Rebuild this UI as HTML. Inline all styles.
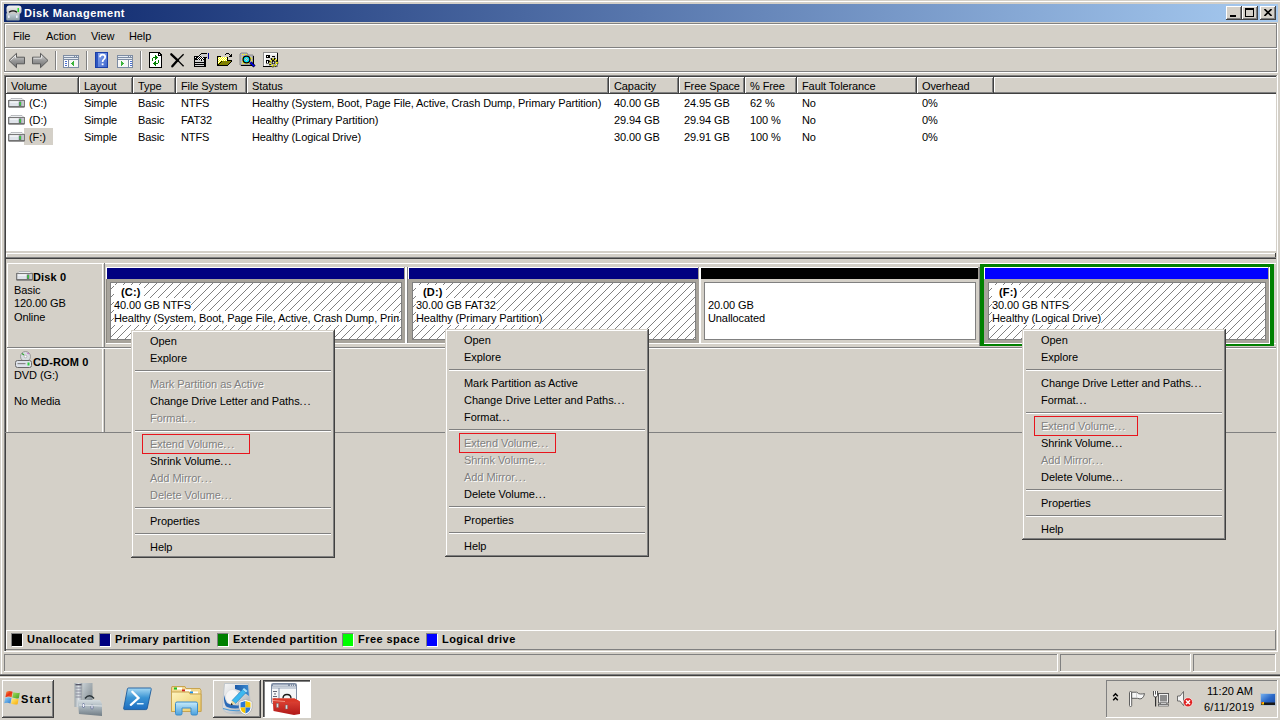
<!DOCTYPE html><html><head><meta charset="utf-8"><style>
html,body{margin:0;padding:0;}
body{width:1280px;height:720px;overflow:hidden;position:relative;background:#D4D0C8;font-family:"Liberation Sans",sans-serif;font-size:11px;}
div{position:absolute;box-sizing:border-box;}
.t{white-space:pre;line-height:13px;height:13px;}
.dis{color:#808080;text-shadow:1px 1px 0 #fff;}
</style></head><body>

<div style="left:1px;top:1px;width:1279px;height:1px;background:#FFFFFF"></div>
<div style="left:1px;top:1px;width:1px;height:675px;background:#FFFFFF"></div>
<div style="left:0px;top:674px;width:1280px;height:1px;background:#808080"></div>
<div style="left:0px;top:675px;width:1280px;height:1px;background:#404040"></div>
<div style="left:4px;top:4px;width:1274px;height:18px;background:linear-gradient(to right,#0A246A,#A6CAF0)"></div>
<div class="t" style="left:24px;top:7px;font-weight:bold;color:#fff;letter-spacing:0.5px;">Disk Management</div>
<div style="left:1226px;top:6px;width:16px;height:14px;background:#D4D0C8"></div>
<div style="left:1226px;top:6px;width:16px;height:1px;background:#FFFFFF"></div>
<div style="left:1226px;top:6px;width:1px;height:14px;background:#FFFFFF"></div>
<div style="left:1226px;top:19px;width:16px;height:1px;background:#404040"></div>
<div style="left:1241px;top:6px;width:1px;height:14px;background:#404040"></div>
<div style="left:1227px;top:18px;width:14px;height:1px;background:#808080"></div>
<div style="left:1240px;top:7px;width:1px;height:12px;background:#808080"></div>
<div style="left:1230px;top:15px;width:6px;height:2px;background:#000"></div>
<div style="left:1242px;top:6px;width:16px;height:14px;background:#D4D0C8"></div>
<div style="left:1242px;top:6px;width:16px;height:1px;background:#FFFFFF"></div>
<div style="left:1242px;top:6px;width:1px;height:14px;background:#FFFFFF"></div>
<div style="left:1242px;top:19px;width:16px;height:1px;background:#404040"></div>
<div style="left:1257px;top:6px;width:1px;height:14px;background:#404040"></div>
<div style="left:1243px;top:18px;width:14px;height:1px;background:#808080"></div>
<div style="left:1256px;top:7px;width:1px;height:12px;background:#808080"></div>
<div style="left:1245px;top:8px;width:9px;height:9px;border:1px solid #000;border-top-width:2px"></div>
<div style="left:1260px;top:6px;width:16px;height:14px;background:#D4D0C8"></div>
<div style="left:1260px;top:6px;width:16px;height:1px;background:#FFFFFF"></div>
<div style="left:1260px;top:6px;width:1px;height:14px;background:#FFFFFF"></div>
<div style="left:1260px;top:19px;width:16px;height:1px;background:#404040"></div>
<div style="left:1275px;top:6px;width:1px;height:14px;background:#404040"></div>
<div style="left:1261px;top:18px;width:14px;height:1px;background:#808080"></div>
<div style="left:1274px;top:7px;width:1px;height:12px;background:#808080"></div>
<svg style="position:absolute;left:1264px;top:9px" width="8" height="7" viewBox="0 0 8 7"><path d="M0.5 0 L7.5 7 M7.5 0 L0.5 7" stroke="#000" stroke-width="1.6"/></svg>
<div style="left:4px;top:23px;width:1274px;height:1px;background:#808080"></div>
<div style="left:5px;top:24px;width:1272px;height:1px;background:#FFFFFF"></div>
<div style="left:4px;top:23px;width:1px;height:25px;background:#808080"></div>
<div style="left:5px;top:24px;width:1px;height:24px;background:#FFFFFF"></div>
<div style="left:1276px;top:23px;width:1px;height:49px;background:#808080"></div>
<div style="left:1277px;top:23px;width:1px;height:50px;background:#FFFFFF"></div>
<div class="t" style="left:13px;top:30px;color:#000;letter-spacing:-0.1px;">File</div>
<div class="t" style="left:46px;top:30px;color:#000;letter-spacing:-0.1px;">Action</div>
<div class="t" style="left:91px;top:30px;color:#000;letter-spacing:-0.1px;">View</div>
<div class="t" style="left:129px;top:30px;color:#000;letter-spacing:-0.1px;">Help</div>
<div style="left:4px;top:47px;width:1273px;height:1px;background:#808080"></div>
<div style="left:5px;top:48px;width:1272px;height:1px;background:#FFFFFF"></div>
<div style="left:4px;top:47px;width:1px;height:25px;background:#808080"></div>
<div style="left:5px;top:48px;width:1px;height:24px;background:#FFFFFF"></div>
<div style="left:4px;top:71px;width:1273px;height:1px;background:#808080"></div>
<div style="left:4px;top:72px;width:1274px;height:1px;background:#FFFFFF"></div>
<div style="left:55px;top:51px;width:1px;height:19px;background:#808080"></div>
<div style="left:56px;top:51px;width:1px;height:19px;background:#FFFFFF"></div>
<div style="left:86px;top:51px;width:1px;height:19px;background:#808080"></div>
<div style="left:87px;top:51px;width:1px;height:19px;background:#FFFFFF"></div>
<div style="left:140px;top:51px;width:1px;height:19px;background:#808080"></div>
<div style="left:141px;top:51px;width:1px;height:19px;background:#FFFFFF"></div>
<div style="left:6px;top:77px;width:1270px;height:174px;background:#fff"></div>
<div style="left:4px;top:75px;width:1274px;height:1px;background:#808080"></div>
<div style="left:5px;top:76px;width:1272px;height:1px;background:#404040"></div>
<div style="left:4px;top:75px;width:1px;height:576px;background:#808080"></div>
<div style="left:5px;top:76px;width:1px;height:575px;background:#404040"></div>
<div style="left:1276px;top:76px;width:1px;height:177px;background:#D4D0C8"></div>
<div style="left:1277px;top:75px;width:1px;height:178px;background:#FFFFFF"></div>
<div style="left:6px;top:77px;width:73px;height:17px;background:#D4D0C8"></div>
<div style="left:6px;top:77px;width:73px;height:1px;background:#FFFFFF"></div>
<div style="left:6px;top:77px;width:1px;height:17px;background:#FFFFFF"></div>
<div style="left:6px;top:93px;width:73px;height:1px;background:#404040"></div>
<div style="left:78px;top:77px;width:1px;height:17px;background:#404040"></div>
<div style="left:7px;top:92px;width:71px;height:1px;background:#808080"></div>
<div style="left:77px;top:78px;width:1px;height:15px;background:#808080"></div>
<div class="t" style="left:11px;top:80px;color:#000;letter-spacing:-0.1px;">Volume</div>
<div style="left:79px;top:77px;width:54px;height:17px;background:#D4D0C8"></div>
<div style="left:79px;top:77px;width:54px;height:1px;background:#FFFFFF"></div>
<div style="left:79px;top:77px;width:1px;height:17px;background:#FFFFFF"></div>
<div style="left:79px;top:93px;width:54px;height:1px;background:#404040"></div>
<div style="left:132px;top:77px;width:1px;height:17px;background:#404040"></div>
<div style="left:80px;top:92px;width:52px;height:1px;background:#808080"></div>
<div style="left:131px;top:78px;width:1px;height:15px;background:#808080"></div>
<div class="t" style="left:84px;top:80px;color:#000;letter-spacing:-0.1px;">Layout</div>
<div style="left:133px;top:77px;width:43px;height:17px;background:#D4D0C8"></div>
<div style="left:133px;top:77px;width:43px;height:1px;background:#FFFFFF"></div>
<div style="left:133px;top:77px;width:1px;height:17px;background:#FFFFFF"></div>
<div style="left:133px;top:93px;width:43px;height:1px;background:#404040"></div>
<div style="left:175px;top:77px;width:1px;height:17px;background:#404040"></div>
<div style="left:134px;top:92px;width:41px;height:1px;background:#808080"></div>
<div style="left:174px;top:78px;width:1px;height:15px;background:#808080"></div>
<div class="t" style="left:138px;top:80px;color:#000;letter-spacing:-0.1px;">Type</div>
<div style="left:176px;top:77px;width:71px;height:17px;background:#D4D0C8"></div>
<div style="left:176px;top:77px;width:71px;height:1px;background:#FFFFFF"></div>
<div style="left:176px;top:77px;width:1px;height:17px;background:#FFFFFF"></div>
<div style="left:176px;top:93px;width:71px;height:1px;background:#404040"></div>
<div style="left:246px;top:77px;width:1px;height:17px;background:#404040"></div>
<div style="left:177px;top:92px;width:69px;height:1px;background:#808080"></div>
<div style="left:245px;top:78px;width:1px;height:15px;background:#808080"></div>
<div class="t" style="left:181px;top:80px;color:#000;letter-spacing:-0.1px;">File System</div>
<div style="left:247px;top:77px;width:362px;height:17px;background:#D4D0C8"></div>
<div style="left:247px;top:77px;width:362px;height:1px;background:#FFFFFF"></div>
<div style="left:247px;top:77px;width:1px;height:17px;background:#FFFFFF"></div>
<div style="left:247px;top:93px;width:362px;height:1px;background:#404040"></div>
<div style="left:608px;top:77px;width:1px;height:17px;background:#404040"></div>
<div style="left:248px;top:92px;width:360px;height:1px;background:#808080"></div>
<div style="left:607px;top:78px;width:1px;height:15px;background:#808080"></div>
<div class="t" style="left:252px;top:80px;color:#000;letter-spacing:-0.1px;">Status</div>
<div style="left:609px;top:77px;width:70px;height:17px;background:#D4D0C8"></div>
<div style="left:609px;top:77px;width:70px;height:1px;background:#FFFFFF"></div>
<div style="left:609px;top:77px;width:1px;height:17px;background:#FFFFFF"></div>
<div style="left:609px;top:93px;width:70px;height:1px;background:#404040"></div>
<div style="left:678px;top:77px;width:1px;height:17px;background:#404040"></div>
<div style="left:610px;top:92px;width:68px;height:1px;background:#808080"></div>
<div style="left:677px;top:78px;width:1px;height:15px;background:#808080"></div>
<div class="t" style="left:614px;top:80px;color:#000;letter-spacing:-0.1px;">Capacity</div>
<div style="left:679px;top:77px;width:66px;height:17px;background:#D4D0C8"></div>
<div style="left:679px;top:77px;width:66px;height:1px;background:#FFFFFF"></div>
<div style="left:679px;top:77px;width:1px;height:17px;background:#FFFFFF"></div>
<div style="left:679px;top:93px;width:66px;height:1px;background:#404040"></div>
<div style="left:744px;top:77px;width:1px;height:17px;background:#404040"></div>
<div style="left:680px;top:92px;width:64px;height:1px;background:#808080"></div>
<div style="left:743px;top:78px;width:1px;height:15px;background:#808080"></div>
<div class="t" style="left:684px;top:80px;color:#000;letter-spacing:-0.1px;">Free Space</div>
<div style="left:745px;top:77px;width:52px;height:17px;background:#D4D0C8"></div>
<div style="left:745px;top:77px;width:52px;height:1px;background:#FFFFFF"></div>
<div style="left:745px;top:77px;width:1px;height:17px;background:#FFFFFF"></div>
<div style="left:745px;top:93px;width:52px;height:1px;background:#404040"></div>
<div style="left:796px;top:77px;width:1px;height:17px;background:#404040"></div>
<div style="left:746px;top:92px;width:50px;height:1px;background:#808080"></div>
<div style="left:795px;top:78px;width:1px;height:15px;background:#808080"></div>
<div class="t" style="left:750px;top:80px;color:#000;letter-spacing:-0.1px;">% Free</div>
<div style="left:797px;top:77px;width:120px;height:17px;background:#D4D0C8"></div>
<div style="left:797px;top:77px;width:120px;height:1px;background:#FFFFFF"></div>
<div style="left:797px;top:77px;width:1px;height:17px;background:#FFFFFF"></div>
<div style="left:797px;top:93px;width:120px;height:1px;background:#404040"></div>
<div style="left:916px;top:77px;width:1px;height:17px;background:#404040"></div>
<div style="left:798px;top:92px;width:118px;height:1px;background:#808080"></div>
<div style="left:915px;top:78px;width:1px;height:15px;background:#808080"></div>
<div class="t" style="left:802px;top:80px;color:#000;letter-spacing:-0.1px;">Fault Tolerance</div>
<div style="left:917px;top:77px;width:77px;height:17px;background:#D4D0C8"></div>
<div style="left:917px;top:77px;width:77px;height:1px;background:#FFFFFF"></div>
<div style="left:917px;top:77px;width:1px;height:17px;background:#FFFFFF"></div>
<div style="left:917px;top:93px;width:77px;height:1px;background:#404040"></div>
<div style="left:993px;top:77px;width:1px;height:17px;background:#404040"></div>
<div style="left:918px;top:92px;width:75px;height:1px;background:#808080"></div>
<div style="left:992px;top:78px;width:1px;height:15px;background:#808080"></div>
<div class="t" style="left:922px;top:80px;color:#000;letter-spacing:-0.1px;">Overhead</div>
<div style="left:994px;top:77px;width:282px;height:17px;background:#D4D0C8"></div>
<div style="left:994px;top:77px;width:282px;height:1px;background:#FFFFFF"></div>
<div style="left:994px;top:77px;width:1px;height:17px;background:#FFFFFF"></div>
<div style="left:994px;top:92px;width:282px;height:1px;background:#808080"></div>
<div style="left:994px;top:93px;width:282px;height:1px;background:#404040"></div>
<div class="t" style="left:29px;top:97px;color:#000;letter-spacing:-0.1px;">(C:)</div>
<div class="t" style="left:84px;top:97px;color:#000;letter-spacing:-0.1px;">Simple</div>
<div class="t" style="left:138px;top:97px;color:#000;letter-spacing:-0.1px;">Basic</div>
<div class="t" style="left:181px;top:97px;color:#000;letter-spacing:-0.1px;">NTFS</div>
<div class="t" style="left:252px;top:97px;color:#000;letter-spacing:-0.1px;">Healthy (System, Boot, Page File, Active, Crash Dump, Primary Partition)</div>
<div class="t" style="left:614px;top:97px;color:#000;letter-spacing:-0.1px;">40.00 GB</div>
<div class="t" style="left:684px;top:97px;color:#000;letter-spacing:-0.1px;">24.95 GB</div>
<div class="t" style="left:750px;top:97px;color:#000;letter-spacing:-0.1px;">62 %</div>
<div class="t" style="left:802px;top:97px;color:#000;letter-spacing:-0.1px;">No</div>
<div class="t" style="left:922px;top:97px;color:#000;letter-spacing:-0.1px;">0%</div>
<svg style="position:absolute;left:8px;top:98px" width="17" height="10" viewBox="0 0 17 10"><path d="M3 0.5 L14 0.5 L16.5 3 L0.5 3 Z" fill="#eceef0" stroke="#a0a4a8" stroke-width="0.7"/><rect x="0.5" y="2.5" width="16" height="6" fill="#c4c8cc" stroke="#7a7a7a" stroke-width="1"/><rect x="2" y="3.5" width="12" height="4.5" fill="#dfe3ea"/><rect x="2" y="3.5" width="10" height="1" fill="#fff"/><rect x="10.8" y="3.5" width="2.6" height="4.5" fill="#6a5a7a"/><rect x="11.5" y="4" width="1.3" height="3.6" fill="#2ee02e"/><rect x="0.5" y="8.3" width="16" height="1.4" fill="#707070"/></svg>
<div class="t" style="left:29px;top:114px;color:#000;letter-spacing:-0.1px;">(D:)</div>
<div class="t" style="left:84px;top:114px;color:#000;letter-spacing:-0.1px;">Simple</div>
<div class="t" style="left:138px;top:114px;color:#000;letter-spacing:-0.1px;">Basic</div>
<div class="t" style="left:181px;top:114px;color:#000;letter-spacing:-0.1px;">FAT32</div>
<div class="t" style="left:252px;top:114px;color:#000;letter-spacing:-0.1px;">Healthy (Primary Partition)</div>
<div class="t" style="left:614px;top:114px;color:#000;letter-spacing:-0.1px;">29.94 GB</div>
<div class="t" style="left:684px;top:114px;color:#000;letter-spacing:-0.1px;">29.94 GB</div>
<div class="t" style="left:750px;top:114px;color:#000;letter-spacing:-0.1px;">100 %</div>
<div class="t" style="left:802px;top:114px;color:#000;letter-spacing:-0.1px;">No</div>
<div class="t" style="left:922px;top:114px;color:#000;letter-spacing:-0.1px;">0%</div>
<svg style="position:absolute;left:8px;top:115px" width="17" height="10" viewBox="0 0 17 10"><path d="M3 0.5 L14 0.5 L16.5 3 L0.5 3 Z" fill="#eceef0" stroke="#a0a4a8" stroke-width="0.7"/><rect x="0.5" y="2.5" width="16" height="6" fill="#c4c8cc" stroke="#7a7a7a" stroke-width="1"/><rect x="2" y="3.5" width="12" height="4.5" fill="#dfe3ea"/><rect x="2" y="3.5" width="10" height="1" fill="#fff"/><rect x="10.8" y="3.5" width="2.6" height="4.5" fill="#6a5a7a"/><rect x="11.5" y="4" width="1.3" height="3.6" fill="#2ee02e"/><rect x="0.5" y="8.3" width="16" height="1.4" fill="#707070"/></svg>
<div style="left:24px;top:128px;width:29px;height:17px;background:#D4D0C8"></div>
<div class="t" style="left:29px;top:131px;color:#000;letter-spacing:-0.1px;">(F:)</div>
<div class="t" style="left:84px;top:131px;color:#000;letter-spacing:-0.1px;">Simple</div>
<div class="t" style="left:138px;top:131px;color:#000;letter-spacing:-0.1px;">Basic</div>
<div class="t" style="left:181px;top:131px;color:#000;letter-spacing:-0.1px;">NTFS</div>
<div class="t" style="left:252px;top:131px;color:#000;letter-spacing:-0.1px;">Healthy (Logical Drive)</div>
<div class="t" style="left:614px;top:131px;color:#000;letter-spacing:-0.1px;">30.00 GB</div>
<div class="t" style="left:684px;top:131px;color:#000;letter-spacing:-0.1px;">29.91 GB</div>
<div class="t" style="left:750px;top:131px;color:#000;letter-spacing:-0.1px;">100 %</div>
<div class="t" style="left:802px;top:131px;color:#000;letter-spacing:-0.1px;">No</div>
<div class="t" style="left:922px;top:131px;color:#000;letter-spacing:-0.1px;">0%</div>
<svg style="position:absolute;left:8px;top:132px" width="17" height="10" viewBox="0 0 17 10"><path d="M3 0.5 L14 0.5 L16.5 3 L0.5 3 Z" fill="#eceef0" stroke="#a0a4a8" stroke-width="0.7"/><rect x="0.5" y="2.5" width="16" height="6" fill="#c4c8cc" stroke="#7a7a7a" stroke-width="1"/><rect x="2" y="3.5" width="12" height="4.5" fill="#dfe3ea"/><rect x="2" y="3.5" width="10" height="1" fill="#fff"/><rect x="10.8" y="3.5" width="2.6" height="4.5" fill="#6a5a7a"/><rect x="11.5" y="4" width="1.3" height="3.6" fill="#2ee02e"/><rect x="0.5" y="8.3" width="16" height="1.4" fill="#707070"/></svg>
<div style="left:6px;top:253px;width:1270px;height:1px;background:#FFFFFF"></div>
<div style="left:6px;top:253px;width:1px;height:5px;background:#FFFFFF"></div>
<div style="left:1275px;top:253px;width:1px;height:6px;background:#404040"></div>
<div style="left:6px;top:257px;width:1270px;height:1px;background:#808080"></div>
<div style="left:6px;top:258px;width:1270px;height:1px;background:#404040"></div>
<div style="left:1277px;top:253px;width:1px;height:399px;background:#FFFFFF"></div>
<div style="left:7px;top:263px;width:1269px;height:1px;background:#FFFFFF"></div>
<div style="left:7px;top:263px;width:1px;height:85px;background:#FFFFFF"></div>
<div style="left:102px;top:263px;width:1px;height:85px;background:#FFFFFF"></div>
<div style="left:104px;top:263px;width:1px;height:85px;background:#808080"></div>
<div style="left:7px;top:347px;width:1269px;height:1px;background:#808080"></div>
<div style="left:7px;top:348px;width:1269px;height:1px;background:#FFFFFF"></div>
<div style="left:7px;top:349px;width:1px;height:83px;background:#FFFFFF"></div>
<div style="left:102px;top:349px;width:1px;height:83px;background:#FFFFFF"></div>
<div style="left:104px;top:349px;width:1px;height:83px;background:#808080"></div>
<div style="left:4px;top:432px;width:1272px;height:1px;background:#808080"></div>
<div class="t" style="left:33px;top:271px;font-weight:bold;color:#000;letter-spacing:0.15px;">Disk 0</div>
<div class="t" style="left:14px;top:284px;color:#000;letter-spacing:-0.1px;">Basic</div>
<div class="t" style="left:14px;top:297px;color:#000;letter-spacing:-0.1px;">120.00 GB</div>
<div class="t" style="left:14px;top:311px;color:#000;letter-spacing:-0.1px;">Online</div>
<div class="t" style="left:33px;top:356px;font-weight:bold;color:#000;letter-spacing:0.15px;">CD-ROM 0</div>
<div class="t" style="left:14px;top:369px;color:#000;letter-spacing:-0.1px;">DVD (G:)</div>
<div class="t" style="left:14px;top:395px;color:#000;letter-spacing:-0.1px;">No Media</div>
<div style="left:106px;top:343px;width:1170px;height:1px;background:#FFFFFF"></div>
<div style="left:106px;top:267px;width:298px;height:1px;background:#FFFFFF"></div>
<div style="left:107px;top:268px;width:297px;height:11px;background:#000080"></div>
<div style="left:404px;top:267px;width:1px;height:12px;background:#A09C94"></div>
<div style="left:106px;top:279px;width:299px;height:64px;background:#A8A49C"></div>
<div style="left:106px;top:267px;width:1px;height:12px;background:#FFFFFF"></div>
<div style="left:110px;top:282px;width:292px;height:58px;background:#808080"></div>
<svg style="position:absolute;left:111px;top:283px" width="290" height="56" shape-rendering="crispEdges"><defs><pattern id="h111_283" x="1" y="5" width="8" height="8" patternUnits="userSpaceOnUse"><g fill="#808080"><rect x="0" y="7" width="1" height="1"/><rect x="1" y="6" width="1" height="1"/><rect x="2" y="5" width="1" height="1"/><rect x="3" y="4" width="1" height="1"/><rect x="4" y="3" width="1" height="1"/><rect x="5" y="2" width="1" height="1"/><rect x="6" y="1" width="1" height="1"/><rect x="7" y="0" width="1" height="1"/></g></pattern></defs><rect width="290" height="56" fill="#fff"/><rect width="290" height="56" fill="url(#h111_283)"/></svg>
<div style="left:111px;top:283px;width:288px;height:56px;overflow:hidden">
<div class="t" style="left:3px;top:3px;font-weight:bold;color:#000;letter-spacing:0.15px;background:#fff;margin-top:-1px;padding-top:1px;height:14px;padding-left:7px;padding-right:3px">(C:)</div>
<div class="t" style="left:3px;top:16px;color:#000;letter-spacing:-0.1px;background:#fff;margin-top:-1px;padding-top:1px;height:14px;">40.00 GB NTFS</div>
<div class="t" style="left:3px;top:29px;color:#000;letter-spacing:-0.1px;background:#fff;margin-top:-1px;padding-top:1px;height:14px;">Healthy (System, Boot, Page File, Active, Crash Dump, Primary Partition)</div>
</div>
<div style="left:106px;top:279px;width:1px;height:64px;background:#8C8880"></div>
<div style="left:405px;top:267px;width:1px;height:77px;background:#FFFFFF"></div>
<div style="left:406px;top:267px;width:1px;height:77px;background:#FFFFFF"></div>
<div style="left:407px;top:267px;width:1px;height:76px;background:#808080"></div>
<div style="left:408px;top:267px;width:290px;height:1px;background:#FFFFFF"></div>
<div style="left:409px;top:268px;width:289px;height:11px;background:#000080"></div>
<div style="left:698px;top:267px;width:1px;height:12px;background:#A09C94"></div>
<div style="left:408px;top:279px;width:291px;height:64px;background:#A8A49C"></div>
<div style="left:408px;top:267px;width:1px;height:12px;background:#FFFFFF"></div>
<div style="left:412px;top:282px;width:284px;height:58px;background:#808080"></div>
<svg style="position:absolute;left:413px;top:283px" width="282" height="56" shape-rendering="crispEdges"><defs><pattern id="h413_283" x="3" y="5" width="8" height="8" patternUnits="userSpaceOnUse"><g fill="#808080"><rect x="0" y="7" width="1" height="1"/><rect x="1" y="6" width="1" height="1"/><rect x="2" y="5" width="1" height="1"/><rect x="3" y="4" width="1" height="1"/><rect x="4" y="3" width="1" height="1"/><rect x="5" y="2" width="1" height="1"/><rect x="6" y="1" width="1" height="1"/><rect x="7" y="0" width="1" height="1"/></g></pattern></defs><rect width="282" height="56" fill="#fff"/><rect width="282" height="56" fill="url(#h413_283)"/></svg>
<div style="left:413px;top:283px;width:280px;height:56px;overflow:hidden">
<div class="t" style="left:3px;top:3px;font-weight:bold;color:#000;letter-spacing:0.15px;background:#fff;margin-top:-1px;padding-top:1px;height:14px;padding-left:7px;padding-right:3px">(D:)</div>
<div class="t" style="left:3px;top:16px;color:#000;letter-spacing:-0.1px;background:#fff;margin-top:-1px;padding-top:1px;height:14px;">30.00 GB FAT32</div>
<div class="t" style="left:3px;top:29px;color:#000;letter-spacing:-0.1px;background:#fff;margin-top:-1px;padding-top:1px;height:14px;">Healthy (Primary Partition)</div>
</div>
<div style="left:699px;top:267px;width:1px;height:77px;background:#FFFFFF"></div>
<div style="left:700px;top:267px;width:278px;height:1px;background:#FFFFFF"></div>
<div style="left:701px;top:268px;width:277px;height:11px;background:#000000"></div>
<div style="left:978px;top:267px;width:1px;height:12px;background:#A09C94"></div>
<div style="left:700px;top:279px;width:279px;height:64px;background:#D4D0C8"></div>
<div style="left:700px;top:267px;width:1px;height:76px;background:#FFFFFF"></div>
<div style="left:704px;top:282px;width:272px;height:58px;background:#808080"></div>
<div style="left:705px;top:283px;width:270px;height:56px;background:#fff"></div>
<div style="left:705px;top:283px;width:268px;height:56px;overflow:hidden">
<div class="t" style="left:3px;top:16px;color:#000;letter-spacing:-0.1px;background:#fff;margin-top:-1px;padding-top:1px;height:14px;">20.00 GB</div>
<div class="t" style="left:3px;top:29px;color:#000;letter-spacing:-0.1px;background:#fff;margin-top:-1px;padding-top:1px;height:14px;">Unallocated</div>
</div>
<div style="left:979px;top:267px;width:1px;height:79px;background:#808080"></div>
<div style="left:980px;top:264px;width:294px;height:82px;background:#008000"></div>
<div style="left:984px;top:267px;width:286px;height:77px;background:#fff"></div>
<div style="left:984px;top:267px;width:284px;height:1px;background:#FFFFFF"></div>
<div style="left:985px;top:268px;width:283px;height:11px;background:#0000FF"></div>
<div style="left:1268px;top:267px;width:1px;height:12px;background:#A09C94"></div>
<div style="left:984px;top:279px;width:285px;height:64px;background:#A8A49C"></div>
<div style="left:984px;top:267px;width:1px;height:12px;background:#FFFFFF"></div>
<div style="left:988px;top:282px;width:278px;height:58px;background:#808080"></div>
<svg style="position:absolute;left:989px;top:283px" width="276" height="56" shape-rendering="crispEdges"><defs><pattern id="h989_283" x="3" y="5" width="8" height="8" patternUnits="userSpaceOnUse"><g fill="#808080"><rect x="0" y="7" width="1" height="1"/><rect x="1" y="6" width="1" height="1"/><rect x="2" y="5" width="1" height="1"/><rect x="3" y="4" width="1" height="1"/><rect x="4" y="3" width="1" height="1"/><rect x="5" y="2" width="1" height="1"/><rect x="6" y="1" width="1" height="1"/><rect x="7" y="0" width="1" height="1"/></g></pattern></defs><rect width="276" height="56" fill="#fff"/><rect width="276" height="56" fill="url(#h989_283)"/></svg>
<div style="left:989px;top:283px;width:274px;height:56px;overflow:hidden">
<div class="t" style="left:3px;top:3px;font-weight:bold;color:#000;letter-spacing:0.15px;background:#fff;margin-top:-1px;padding-top:1px;height:14px;padding-left:7px;padding-right:3px">(F:)</div>
<div class="t" style="left:3px;top:16px;color:#000;letter-spacing:-0.1px;background:#fff;margin-top:-1px;padding-top:1px;height:14px;">30.00 GB NTFS</div>
<div class="t" style="left:3px;top:29px;color:#000;letter-spacing:-0.1px;background:#fff;margin-top:-1px;padding-top:1px;height:14px;">Healthy (Logical Drive)</div>
</div>
<div style="left:6px;top:630px;width:1270px;height:1px;background:#FFFFFF"></div>
<div style="left:6px;top:630px;width:1px;height:19px;background:#FFFFFF"></div>
<div style="left:6px;top:649px;width:1270px;height:1px;background:#808080"></div>
<div style="left:1275px;top:630px;width:1px;height:20px;background:#808080"></div>
<div style="left:4px;top:651px;width:1274px;height:1px;background:#FFFFFF"></div>
<div style="left:11px;top:633px;width:12px;height:14px;background:#000000;border-top:1px solid #808080;border-left:1px solid #808080;border-right:1px solid #fff;border-bottom:1px solid #fff"></div>
<div class="t" style="left:27px;top:633px;font-weight:bold;color:#000;letter-spacing:0.45px;">Unallocated</div>
<div style="left:99px;top:633px;width:12px;height:14px;background:#000080;border-top:1px solid #808080;border-left:1px solid #808080;border-right:1px solid #fff;border-bottom:1px solid #fff"></div>
<div class="t" style="left:115px;top:633px;font-weight:bold;color:#000;letter-spacing:0.45px;">Primary partition</div>
<div style="left:217px;top:633px;width:12px;height:14px;background:#008000;border-top:1px solid #808080;border-left:1px solid #808080;border-right:1px solid #fff;border-bottom:1px solid #fff"></div>
<div class="t" style="left:233px;top:633px;font-weight:bold;color:#000;letter-spacing:0.45px;">Extended partition</div>
<div style="left:342px;top:633px;width:12px;height:14px;background:#00FF00;border-top:1px solid #808080;border-left:1px solid #808080;border-right:1px solid #fff;border-bottom:1px solid #fff"></div>
<div class="t" style="left:358px;top:633px;font-weight:bold;color:#000;letter-spacing:0.45px;">Free space</div>
<div style="left:426px;top:633px;width:12px;height:14px;background:#0000FF;border-top:1px solid #808080;border-left:1px solid #808080;border-right:1px solid #fff;border-bottom:1px solid #fff"></div>
<div class="t" style="left:442px;top:633px;font-weight:bold;color:#000;letter-spacing:0.45px;">Logical drive</div>
<div style="left:4px;top:654px;width:1054px;height:1px;background:#808080"></div>
<div style="left:4px;top:654px;width:1px;height:18px;background:#808080"></div>
<div style="left:4px;top:671px;width:1054px;height:1px;background:#FFFFFF"></div>
<div style="left:1057px;top:654px;width:1px;height:18px;background:#FFFFFF"></div>
<div style="left:1060px;top:654px;width:131px;height:1px;background:#808080"></div>
<div style="left:1060px;top:654px;width:1px;height:18px;background:#808080"></div>
<div style="left:1060px;top:671px;width:131px;height:1px;background:#FFFFFF"></div>
<div style="left:1190px;top:654px;width:1px;height:18px;background:#FFFFFF"></div>
<div style="left:1193px;top:654px;width:83px;height:1px;background:#808080"></div>
<div style="left:1193px;top:654px;width:1px;height:18px;background:#808080"></div>
<div style="left:1193px;top:671px;width:83px;height:1px;background:#FFFFFF"></div>
<div style="left:1275px;top:654px;width:1px;height:18px;background:#FFFFFF"></div>
<div style="left:0px;top:676px;width:1280px;height:1px;background:#D4D0C8"></div>
<div style="left:0px;top:677px;width:1280px;height:1px;background:#FFFFFF"></div>
<div style="left:2px;top:680px;width:52px;height:38px;background:#D4D0C8"></div>
<div style="left:2px;top:680px;width:52px;height:1px;background:#FFFFFF"></div>
<div style="left:2px;top:680px;width:1px;height:38px;background:#FFFFFF"></div>
<div style="left:2px;top:717px;width:52px;height:1px;background:#404040"></div>
<div style="left:53px;top:680px;width:1px;height:38px;background:#404040"></div>
<div style="left:3px;top:716px;width:50px;height:1px;background:#808080"></div>
<div style="left:52px;top:681px;width:1px;height:36px;background:#808080"></div>
<div class="t" style="left:21px;top:693px;font-weight:bold;color:#000;letter-spacing:1.1px;">Start</div>
<div style="left:213px;top:680px;width:48px;height:38px;background:#D4D0C8"></div>
<div style="left:213px;top:680px;width:48px;height:1px;background:#FFFFFF"></div>
<div style="left:213px;top:680px;width:1px;height:38px;background:#FFFFFF"></div>
<div style="left:213px;top:717px;width:48px;height:1px;background:#404040"></div>
<div style="left:260px;top:680px;width:1px;height:38px;background:#404040"></div>
<div style="left:214px;top:716px;width:46px;height:1px;background:#808080"></div>
<div style="left:259px;top:681px;width:1px;height:36px;background:#808080"></div>
<div style="left:263px;top:680px;width:48px;height:38px;background:#fff"></div>
<div style="left:263px;top:680px;width:48px;height:1px;background:#404040"></div>
<div style="left:263px;top:680px;width:1px;height:38px;background:#404040"></div>
<div style="left:264px;top:681px;width:46px;height:1px;background:#808080"></div>
<div style="left:264px;top:681px;width:1px;height:36px;background:#808080"></div>
<div style="left:263px;top:717px;width:48px;height:1px;background:#FFFFFF"></div>
<div style="left:310px;top:680px;width:1px;height:38px;background:#FFFFFF"></div>
<div style="left:1106px;top:680px;width:172px;height:1px;background:#808080"></div>
<div style="left:1106px;top:680px;width:1px;height:38px;background:#808080"></div>
<div style="left:1106px;top:717px;width:172px;height:1px;background:#FFFFFF"></div>
<div style="left:1277px;top:680px;width:1px;height:38px;background:#FFFFFF"></div>
<div class="t" style="left:1207px;top:685px;color:#000;letter-spacing:0.05px;">11:20 AM</div>
<div class="t" style="left:1204px;top:701px;color:#000;letter-spacing:0.25px;">6/11/2019</div>
<div style="left:131px;top:330px;width:204px;height:228px;background:#D4D0C8"></div>
<div style="left:131px;top:330px;width:204px;height:1px;background:#D4D0C8"></div>
<div style="left:131px;top:330px;width:1px;height:228px;background:#D4D0C8"></div>
<div style="left:132px;top:331px;width:202px;height:1px;background:#FFFFFF"></div>
<div style="left:132px;top:331px;width:1px;height:226px;background:#FFFFFF"></div>
<div style="left:132px;top:556px;width:202px;height:1px;background:#808080"></div>
<div style="left:333px;top:331px;width:1px;height:226px;background:#808080"></div>
<div style="left:131px;top:557px;width:204px;height:1px;background:#404040"></div>
<div style="left:334px;top:330px;width:1px;height:228px;background:#404040"></div>
<div class="t" style="left:150px;top:335px;color:#000;letter-spacing:-0.05px;">Open</div>
<div class="t" style="left:150px;top:352px;color:#000;letter-spacing:-0.05px;">Explore</div>
<div style="left:135px;top:370px;width:196px;height:1px;background:#808080"></div>
<div style="left:135px;top:371px;width:196px;height:1px;background:#FFFFFF"></div>
<div class="t" style="left:150px;top:378px;color:#808080;letter-spacing:-0.05px;text-shadow:1px 1px 0 #fff">Mark Partition as Active</div>
<div class="t" style="left:150px;top:395px;color:#000;letter-spacing:-0.05px;">Change Drive Letter and Paths<span style="letter-spacing:0.9px">...</span></div>
<div class="t" style="left:150px;top:412px;color:#808080;letter-spacing:-0.05px;text-shadow:1px 1px 0 #fff">Format<span style="letter-spacing:0.9px">...</span></div>
<div style="left:135px;top:430px;width:196px;height:1px;background:#808080"></div>
<div style="left:135px;top:431px;width:196px;height:1px;background:#FFFFFF"></div>
<div class="t" style="left:150px;top:438px;color:#808080;letter-spacing:-0.05px;text-shadow:1px 1px 0 #fff">Extend Volume<span style="letter-spacing:0.9px">...</span></div>
<div class="t" style="left:150px;top:455px;color:#000;letter-spacing:-0.05px;">Shrink Volume<span style="letter-spacing:0.9px">...</span></div>
<div class="t" style="left:150px;top:472px;color:#808080;letter-spacing:-0.05px;text-shadow:1px 1px 0 #fff">Add Mirror<span style="letter-spacing:0.9px">...</span></div>
<div class="t" style="left:150px;top:489px;color:#808080;letter-spacing:-0.05px;text-shadow:1px 1px 0 #fff">Delete Volume<span style="letter-spacing:0.9px">...</span></div>
<div style="left:135px;top:507px;width:196px;height:1px;background:#808080"></div>
<div style="left:135px;top:508px;width:196px;height:1px;background:#FFFFFF"></div>
<div class="t" style="left:150px;top:515px;color:#000;letter-spacing:-0.05px;">Properties</div>
<div style="left:135px;top:533px;width:196px;height:1px;background:#808080"></div>
<div style="left:135px;top:534px;width:196px;height:1px;background:#FFFFFF"></div>
<div class="t" style="left:150px;top:541px;color:#000;letter-spacing:-0.05px;">Help</div>
<div style="left:142px;top:434px;width:108px;height:20px;border:1px solid #E8141C"></div>
<div style="left:445px;top:329px;width:204px;height:228px;background:#D4D0C8"></div>
<div style="left:445px;top:329px;width:204px;height:1px;background:#D4D0C8"></div>
<div style="left:445px;top:329px;width:1px;height:228px;background:#D4D0C8"></div>
<div style="left:446px;top:330px;width:202px;height:1px;background:#FFFFFF"></div>
<div style="left:446px;top:330px;width:1px;height:226px;background:#FFFFFF"></div>
<div style="left:446px;top:555px;width:202px;height:1px;background:#808080"></div>
<div style="left:647px;top:330px;width:1px;height:226px;background:#808080"></div>
<div style="left:445px;top:556px;width:204px;height:1px;background:#404040"></div>
<div style="left:648px;top:329px;width:1px;height:228px;background:#404040"></div>
<div class="t" style="left:464px;top:334px;color:#000;letter-spacing:-0.05px;">Open</div>
<div class="t" style="left:464px;top:351px;color:#000;letter-spacing:-0.05px;">Explore</div>
<div style="left:449px;top:369px;width:196px;height:1px;background:#808080"></div>
<div style="left:449px;top:370px;width:196px;height:1px;background:#FFFFFF"></div>
<div class="t" style="left:464px;top:377px;color:#000;letter-spacing:-0.05px;">Mark Partition as Active</div>
<div class="t" style="left:464px;top:394px;color:#000;letter-spacing:-0.05px;">Change Drive Letter and Paths<span style="letter-spacing:0.9px">...</span></div>
<div class="t" style="left:464px;top:411px;color:#000;letter-spacing:-0.05px;">Format<span style="letter-spacing:0.9px">...</span></div>
<div style="left:449px;top:429px;width:196px;height:1px;background:#808080"></div>
<div style="left:449px;top:430px;width:196px;height:1px;background:#FFFFFF"></div>
<div class="t" style="left:464px;top:437px;color:#808080;letter-spacing:-0.05px;text-shadow:1px 1px 0 #fff">Extend Volume<span style="letter-spacing:0.9px">...</span></div>
<div class="t" style="left:464px;top:454px;color:#808080;letter-spacing:-0.05px;text-shadow:1px 1px 0 #fff">Shrink Volume<span style="letter-spacing:0.9px">...</span></div>
<div class="t" style="left:464px;top:471px;color:#808080;letter-spacing:-0.05px;text-shadow:1px 1px 0 #fff">Add Mirror<span style="letter-spacing:0.9px">...</span></div>
<div class="t" style="left:464px;top:488px;color:#000;letter-spacing:-0.05px;">Delete Volume<span style="letter-spacing:0.9px">...</span></div>
<div style="left:449px;top:506px;width:196px;height:1px;background:#808080"></div>
<div style="left:449px;top:507px;width:196px;height:1px;background:#FFFFFF"></div>
<div class="t" style="left:464px;top:514px;color:#000;letter-spacing:-0.05px;">Properties</div>
<div style="left:449px;top:532px;width:196px;height:1px;background:#808080"></div>
<div style="left:449px;top:533px;width:196px;height:1px;background:#FFFFFF"></div>
<div class="t" style="left:464px;top:540px;color:#000;letter-spacing:-0.05px;">Help</div>
<div style="left:459px;top:433px;width:97px;height:20px;border:1px solid #E8141C"></div>
<div style="left:1022px;top:329px;width:204px;height:211px;background:#D4D0C8"></div>
<div style="left:1022px;top:329px;width:204px;height:1px;background:#D4D0C8"></div>
<div style="left:1022px;top:329px;width:1px;height:211px;background:#D4D0C8"></div>
<div style="left:1023px;top:330px;width:202px;height:1px;background:#FFFFFF"></div>
<div style="left:1023px;top:330px;width:1px;height:209px;background:#FFFFFF"></div>
<div style="left:1023px;top:538px;width:202px;height:1px;background:#808080"></div>
<div style="left:1224px;top:330px;width:1px;height:209px;background:#808080"></div>
<div style="left:1022px;top:539px;width:204px;height:1px;background:#404040"></div>
<div style="left:1225px;top:329px;width:1px;height:211px;background:#404040"></div>
<div class="t" style="left:1041px;top:334px;color:#000;letter-spacing:-0.05px;">Open</div>
<div class="t" style="left:1041px;top:351px;color:#000;letter-spacing:-0.05px;">Explore</div>
<div style="left:1026px;top:369px;width:196px;height:1px;background:#808080"></div>
<div style="left:1026px;top:370px;width:196px;height:1px;background:#FFFFFF"></div>
<div class="t" style="left:1041px;top:377px;color:#000;letter-spacing:-0.05px;">Change Drive Letter and Paths<span style="letter-spacing:0.9px">...</span></div>
<div class="t" style="left:1041px;top:394px;color:#000;letter-spacing:-0.05px;">Format<span style="letter-spacing:0.9px">...</span></div>
<div style="left:1026px;top:412px;width:196px;height:1px;background:#808080"></div>
<div style="left:1026px;top:413px;width:196px;height:1px;background:#FFFFFF"></div>
<div class="t" style="left:1041px;top:420px;color:#808080;letter-spacing:-0.05px;text-shadow:1px 1px 0 #fff">Extend Volume<span style="letter-spacing:0.9px">...</span></div>
<div class="t" style="left:1041px;top:437px;color:#000;letter-spacing:-0.05px;">Shrink Volume<span style="letter-spacing:0.9px">...</span></div>
<div class="t" style="left:1041px;top:454px;color:#808080;letter-spacing:-0.05px;text-shadow:1px 1px 0 #fff">Add Mirror<span style="letter-spacing:0.9px">...</span></div>
<div class="t" style="left:1041px;top:471px;color:#000;letter-spacing:-0.05px;">Delete Volume<span style="letter-spacing:0.9px">...</span></div>
<div style="left:1026px;top:489px;width:196px;height:1px;background:#808080"></div>
<div style="left:1026px;top:490px;width:196px;height:1px;background:#FFFFFF"></div>
<div class="t" style="left:1041px;top:497px;color:#000;letter-spacing:-0.05px;">Properties</div>
<div style="left:1026px;top:515px;width:196px;height:1px;background:#808080"></div>
<div style="left:1026px;top:516px;width:196px;height:1px;background:#FFFFFF"></div>
<div class="t" style="left:1041px;top:523px;color:#000;letter-spacing:-0.05px;">Help</div>
<div style="left:1034px;top:416px;width:104px;height:20px;border:1px solid #E8141C"></div>
<svg style="position:absolute;left:6px;top:5px;overflow:visible" width="16" height="16" viewBox="0 0 16 16" >
<defs><linearGradient id="tb1" x1="0" y1="0" x2="0" y2="1"><stop offset="0" stop-color="#c8d4da"/><stop offset="1" stop-color="#8a9aa2"/></linearGradient>
<linearGradient id="tb2" x1="0" y1="0" x2="0" y2="1"><stop offset="0" stop-color="#f4f4f4"/><stop offset="1" stop-color="#c4c4c4"/></linearGradient></defs>
<rect x="0.3" y="8" width="13.4" height="7.6" rx="1" fill="url(#tb1)"/>
<rect x="2" y="10.5" width="1.6" height="2.4" fill="#eef"/><rect x="10" y="10.5" width="1.6" height="2.4" fill="#eef"/>
<rect x="0.5" y="0.5" width="15" height="8.5" rx="3" fill="url(#tb2)"/>
<path d="M3 7.3 Q7 4.6 11 7.3" stroke="#111" stroke-width="1.3" fill="none"/>
<rect x="11.5" y="3" width="1.5" height="4" fill="#33dd33"/>
</svg>
<svg style="position:absolute;left:8px;top:52px;overflow:visible" width="18" height="17" viewBox="0 0 18 17" ><defs><linearGradient id="ag" x1="0" y1="0" x2="0" y2="1"><stop offset="0" stop-color="#e2e2e2"/><stop offset="0.5" stop-color="#9a9a9a"/><stop offset="1" stop-color="#6c6c6c"/></linearGradient></defs>
<path d="M1 8.5 L8.5 1.3 L8.5 5.2 L16.5 5.2 L16.5 11.8 L8.5 11.8 L8.5 15.7 Z" fill="url(#ag)" stroke="#5a5a5a" stroke-width="1" stroke-linejoin="round"/>
<path d="M2.5 8.5 L7.5 3.6 L7.5 6.2" stroke="#f0f0f0" stroke-width="0.8" fill="none"/></svg>
<svg style="position:absolute;left:31px;top:52px;overflow:visible" width="18" height="17" viewBox="0 0 18 17" >
<path d="M17 8.5 L9.5 1.3 L9.5 5.2 L1.5 5.2 L1.5 11.8 L9.5 11.8 L9.5 15.7 Z" fill="url(#ag)" stroke="#5a5a5a" stroke-width="1" stroke-linejoin="round"/>
<path d="M2.5 6.2 L10.5 6.2 L10.5 3.6" stroke="#f0f0f0" stroke-width="0.8" fill="none"/></svg>
<svg style="position:absolute;left:63px;top:55px;overflow:visible" width="16" height="13" viewBox="0 0 16 13" shape-rendering="crispEdges"><rect x="0" y="0" width="16" height="13" fill="#7D8CA3"/><rect x="1" y="1" width="10" height="1" fill="#E6ECF3"/><rect x="12" y="1" width="1" height="1" fill="#E6ECF3"/><rect x="14" y="1" width="1" height="1" fill="#E6ECF3"/><rect x="1" y="3" width="14" height="1" fill="#E6ECF3"/><rect x="1" y="5" width="4" height="7" fill="#fff"/><rect x="6" y="5" width="9" height="7" fill="#f7f7f7"/><rect x="2" y="6" width="2" height="1" fill="#4a6fd0"/><rect x="2" y="8" width="2" height="1" fill="#4a6fd0"/><rect x="2" y="10" width="2" height="1" fill="#4a6fd0"/><path d="M7.6 8.5 L10.6 5.6 L10.6 11.4 Z" fill="#3cb43c"/></svg>
<svg style="position:absolute;left:117px;top:55px;overflow:visible" width="16" height="13" viewBox="0 0 16 13" shape-rendering="crispEdges"><rect x="0" y="0" width="16" height="13" fill="#7D8CA3"/><rect x="1" y="1" width="10" height="1" fill="#E6ECF3"/><rect x="12" y="1" width="1" height="1" fill="#E6ECF3"/><rect x="14" y="1" width="1" height="1" fill="#E6ECF3"/><rect x="1" y="3" width="14" height="1" fill="#E6ECF3"/><rect x="1" y="5" width="10" height="7" fill="#f7f7f7"/><rect x="12" y="5" width="3" height="7" fill="#fff"/><rect x="12.5" y="6" width="2" height="1" fill="#4a6fd0"/><rect x="12.5" y="8" width="2" height="1" fill="#4a6fd0"/><rect x="12.5" y="10" width="2" height="1" fill="#4a6fd0"/><path d="M7.4 8.5 L4.4 5.6 L4.4 11.4 Z" fill="#3cb43c"/></svg>
<svg style="position:absolute;left:95px;top:52px;overflow:visible" width="13" height="16" viewBox="0 0 13 16" >
<defs><linearGradient id="hb" x1="0" y1="0" x2="1" y2="1"><stop offset="0" stop-color="#8aa8ee"/><stop offset="1" stop-color="#3c64cc"/></linearGradient></defs>
<rect x="0" y="0" width="13" height="16" fill="#1a3fa8"/>
<rect x="3" y="1" width="9" height="14" fill="url(#hb)"/>
<rect x="1" y="1" width="2" height="14" fill="#2d55c0"/>
<path d="M5 5.2 Q5 2.6 7.6 2.6 Q10.2 2.6 10.2 5 Q10.2 6.6 8.6 7.6 Q7.6 8.3 7.6 10" stroke="#fff" stroke-width="1.7" fill="none"/>
<rect x="6.7" y="11.4" width="1.8" height="1.8" fill="#fff"/></svg>
<svg style="position:absolute;left:147px;top:50px;overflow:visible" width="18" height="20" viewBox="0 0 18 20" shape-rendering="crispEdges">
<path d="M2 2 L12 2 L15 5 L15 18 L2 18 Z" fill="#000"/>
<path d="M3 3 L11 3 L11 6 L14 6 L14 17 L3 17 Z" fill="#fff"/>
<rect x="12" y="4" width="1" height="1" fill="#fff"/>
<rect x="6" y="7" width="1" height="1" fill="#008000"/><rect x="7" y="7" width="1" height="1" fill="#008000"/><rect x="8" y="7" width="1" height="1" fill="#008000"/><rect x="9" y="7" width="1" height="1" fill="#008000"/><rect x="10" y="7" width="1" height="1" fill="#008000"/><rect x="8" y="5" width="1" height="1" fill="#008000"/><rect x="8" y="6" width="1" height="1" fill="#008000"/><rect x="8" y="8" width="1" height="1" fill="#008000"/><rect x="8" y="9" width="1" height="1" fill="#008000"/><rect x="9" y="6" width="1" height="1" fill="#008000"/><rect x="9" y="8" width="1" height="1" fill="#008000"/><rect x="5" y="8" width="1" height="1" fill="#008000"/><rect x="5" y="9" width="1" height="1" fill="#008000"/><rect x="5" y="10" width="1" height="1" fill="#008000"/><rect x="11" y="10" width="1" height="1" fill="#008000"/><rect x="11" y="11" width="1" height="1" fill="#008000"/><rect x="11" y="12" width="1" height="1" fill="#008000"/><rect x="6" y="13" width="1" height="1" fill="#008000"/><rect x="7" y="13" width="1" height="1" fill="#008000"/><rect x="8" y="13" width="1" height="1" fill="#008000"/><rect x="9" y="13" width="1" height="1" fill="#008000"/><rect x="10" y="13" width="1" height="1" fill="#008000"/><rect x="8" y="11" width="1" height="1" fill="#008000"/><rect x="8" y="12" width="1" height="1" fill="#008000"/><rect x="8" y="14" width="1" height="1" fill="#008000"/><rect x="8" y="15" width="1" height="1" fill="#008000"/><rect x="7" y="12" width="1" height="1" fill="#008000"/><rect x="7" y="14" width="1" height="1" fill="#008000"/>
</svg>
<svg style="position:absolute;left:168px;top:50px;overflow:visible" width="20" height="20" viewBox="0 0 20 20" >
<path d="M3.3 4.3 L10 10.6" stroke="#000" stroke-width="2.3" stroke-linecap="round"/>
<path d="M10 10.6 L15.6 16.2" stroke="#000" stroke-width="1.3"/>
<path d="M15.6 4.3 L9.6 10.2" stroke="#000" stroke-width="1.4"/>
<path d="M9.6 10.2 L4.3 16.3" stroke="#000" stroke-width="2.3" stroke-linecap="round"/></svg>
<svg style="position:absolute;left:192px;top:50px;overflow:visible" width="20" height="20" viewBox="0 0 20 20" shape-rendering="crispEdges">
<rect x="2" y="6" width="12" height="11" fill="#000"/>
<rect x="3" y="7" width="1" height="1" fill="#fff"/>
<rect x="3" y="10" width="9" height="2" fill="#d0d0d0"/>
<rect x="3" y="13" width="9" height="1" fill="#d0d0d0"/>
<rect x="3" y="15" width="9" height="1" fill="#d0d0d0"/>
<path d="M4 9 L8 4 L9 3 L15 3 L15 8 L12 8 L11 10 L9 11 L8 10 Z" fill="#000"/>
<rect x="5" y="8" width="1" height="1" fill="#fff"/><rect x="6" y="7" width="1" height="1" fill="#fff"/><rect x="7" y="6" width="1" height="1" fill="#fff"/><rect x="8" y="5" width="1" height="1" fill="#fff"/><rect x="7" y="8" width="1" height="1" fill="#fff"/><rect x="8" y="7" width="1" height="1" fill="#fff"/><rect x="9" y="6" width="1" height="1" fill="#fff"/><rect x="9" y="8" width="1" height="1" fill="#fff"/><rect x="10" y="7" width="1" height="1" fill="#fff"/><rect x="8" y="9" width="1" height="1" fill="#fff"/><rect x="10" y="9" width="1" height="1" fill="#fff"/><rect x="11" y="8" width="1" height="1" fill="#fff"/><rect x="6" y="9" width="1" height="1" fill="#fff"/>
<rect x="9" y="4" width="6" height="3" fill="#c8c8c8"/>
<rect x="16" y="3" width="1" height="6" fill="#0000a0"/>
</svg>
<svg style="position:absolute;left:214px;top:50px;overflow:visible" width="20" height="20" viewBox="0 0 20 20" shape-rendering="crispEdges">
<path d="M3 6 L7 6 L7 7 L14 7 L14 10 L18 10 L18 11 L14 16 L3 16 Z" fill="#000"/>
<rect x="4" y="7" width="9" height="8" fill="#ffff00"/>
<rect x="4" y="8" width="1" height="1" fill="#fff"/><rect x="4" y="10" width="1" height="1" fill="#fff"/><rect x="4" y="12" width="1" height="1" fill="#fff"/><rect x="5" y="7" width="1" height="1" fill="#fff"/><rect x="5" y="9" width="1" height="1" fill="#fff"/><rect x="5" y="11" width="1" height="1" fill="#fff"/><rect x="5" y="13" width="1" height="1" fill="#fff"/><rect x="6" y="8" width="1" height="1" fill="#fff"/><rect x="6" y="10" width="1" height="1" fill="#fff"/><rect x="6" y="12" width="1" height="1" fill="#fff"/><rect x="7" y="7" width="1" height="1" fill="#fff"/><rect x="7" y="9" width="1" height="1" fill="#fff"/><rect x="7" y="11" width="1" height="1" fill="#fff"/><rect x="7" y="13" width="1" height="1" fill="#fff"/><rect x="8" y="8" width="1" height="1" fill="#fff"/><rect x="8" y="10" width="1" height="1" fill="#fff"/><rect x="8" y="12" width="1" height="1" fill="#fff"/><rect x="9" y="7" width="1" height="1" fill="#fff"/><rect x="9" y="9" width="1" height="1" fill="#fff"/><rect x="9" y="11" width="1" height="1" fill="#fff"/><rect x="9" y="13" width="1" height="1" fill="#fff"/><rect x="10" y="8" width="1" height="1" fill="#fff"/><rect x="10" y="10" width="1" height="1" fill="#fff"/><rect x="10" y="12" width="1" height="1" fill="#fff"/><rect x="11" y="7" width="1" height="1" fill="#fff"/><rect x="11" y="9" width="1" height="1" fill="#fff"/><rect x="11" y="11" width="1" height="1" fill="#fff"/><rect x="11" y="13" width="1" height="1" fill="#fff"/><rect x="12" y="8" width="1" height="1" fill="#fff"/><rect x="12" y="10" width="1" height="1" fill="#fff"/><rect x="12" y="12" width="1" height="1" fill="#fff"/>
<path d="M8 11 L17 11 L13 15 L4 15 Z" fill="#808000"/>
<path d="M4 15 L8 11" stroke="#000" stroke-width="1"/>
<rect x="11" y="4" width="1" height="1" fill="#000"/><rect x="12" y="3" width="1" height="1" fill="#000"/><rect x="13" y="3" width="1" height="1" fill="#000"/><rect x="14" y="3" width="1" height="1" fill="#000"/><rect x="15" y="4" width="1" height="1" fill="#000"/><rect x="16" y="5" width="1" height="1" fill="#000"/><rect x="15" y="6" width="1" height="1" fill="#000"/><rect x="16" y="6" width="1" height="1" fill="#000"/><rect x="17" y="6" width="1" height="1" fill="#000"/><rect x="17" y="5" width="1" height="1" fill="#000"/><rect x="17" y="4" width="1" height="1" fill="#000"/>
</svg>
<svg style="position:absolute;left:238px;top:50px;overflow:visible" width="20" height="20" viewBox="0 0 20 20" >
<path d="M2 4 L3 3 L9 3 L10 5 L15 5 L15 15 L2 15 Z" fill="#b8b8c0" stroke="#8a8a8a" stroke-width="1"/>
<rect x="3" y="15" width="13" height="1" fill="#000"/><rect x="15" y="6" width="1" height="10" fill="#000"/>
<rect x="4" y="4" width="1" height="1" fill="#ffff00"/><rect x="6" y="4" width="1" height="1" fill="#ffff00"/><rect x="8" y="4" width="1" height="1" fill="#ffff00"/><rect x="4" y="7" width="1" height="1" fill="#ffff00"/><rect x="4" y="9" width="1" height="1" fill="#ffff00"/><rect x="4" y="11" width="1" height="1" fill="#ffff00"/><rect x="4" y="13" width="1" height="1" fill="#ffff00"/><rect x="6" y="13" width="1" height="1" fill="#ffff00"/><rect x="8" y="13" width="1" height="1" fill="#ffff00"/><rect x="12" y="7" width="1" height="1" fill="#ffff00"/><rect x="13" y="8" width="1" height="1" fill="#ffff00"/><rect x="12" y="9" width="1" height="1" fill="#ffff00"/><rect x="13" y="10" width="1" height="1" fill="#ffff00"/><rect x="10" y="13" width="1" height="1" fill="#ffff00"/><rect x="5" y="12" width="1" height="1" fill="#ffff00"/>
<path d="M12.5 12.5 L16.5 16.5" stroke="#000" stroke-width="3"/>
<path d="M12.5 12.5 L16.3 16.3" stroke="#0000ff" stroke-width="1.6"/>
<circle cx="8.5" cy="9.5" r="3.4" fill="#00e8f0" stroke="#000" stroke-width="1.3"/>
<rect x="7" y="9" width="1" height="1" fill="#ff9fb0"/><rect x="9" y="9" width="1" height="1" fill="#ff9fb0"/><rect x="8" y="8" width="1" height="1" fill="#ff9fb0"/><rect x="8" y="10" width="1" height="1" fill="#ff9fb0"/>
</svg>
<svg style="position:absolute;left:261px;top:50px;overflow:visible" width="20" height="20" viewBox="0 0 20 20" >
<rect x="2" y="2" width="15" height="15" fill="#909090"/>
<rect x="3" y="3" width="13" height="13" fill="#e8e8e8"/>
<rect x="3" y="3" width="13" height="1.5" fill="#fff"/><rect x="3" y="3" width="1.5" height="13" fill="#fff"/>
<rect x="5" y="5" width="4" height="3" fill="#000"/><rect x="6" y="6" width="1" height="1" fill="#fff"/>
<rect x="11" y="6" width="3" height="1" fill="#000"/>
<rect x="5" y="10" width="3" height="3.5" fill="#000"/><rect x="6" y="11" width="1" height="2" fill="#fff"/>
<rect x="11" y="9" width="2" height="4" fill="#000"/>
<rect x="2" y="16" width="9" height="1" fill="#000"/><rect x="16" y="3" width="1" height="9" fill="#000"/>
<g transform="translate(12.5,12.5)"><circle r="3.6" fill="none" stroke="#000" stroke-width="2.6" stroke-dasharray="1.6 1.2"/><circle r="3.3" fill="none" stroke="#ffff00" stroke-width="1.8" stroke-dasharray="1.3 1.5"/><circle r="1.8" fill="#000"/><circle r="0.9" fill="#e0e0e0"/></g>
</svg>
<svg style="position:absolute;left:16px;top:271px;overflow:visible" width="17" height="10" viewBox="0 0 17 10" ><path d="M3 0.5 L14 0.5 L16.5 3 L0.5 3 Z" fill="#eceef0" stroke="#a0a4a8" stroke-width="0.7"/><rect x="0.5" y="2.5" width="16" height="6" fill="#c4c8cc" stroke="#7a7a7a" stroke-width="1"/><rect x="2" y="3.5" width="12" height="4.5" fill="#dfe3ea"/><rect x="2" y="3.5" width="10" height="1" fill="#fff"/><rect x="10.8" y="3.5" width="2.6" height="4.5" fill="#6a5a7a"/><rect x="11.5" y="4" width="1.3" height="3.6" fill="#2ee02e"/><rect x="0.5" y="8.3" width="16" height="1.4" fill="#707070"/></svg>
<svg style="position:absolute;left:15px;top:351px;overflow:visible" width="18" height="17" viewBox="0 0 18 17" >
<circle cx="10.5" cy="5.5" r="5" fill="#d8dce0" stroke="#8a8a8a" stroke-width="0.8"/>
<circle cx="10.5" cy="5.5" r="1.3" fill="#fff" stroke="#888" stroke-width="0.5"/>
<path d="M7 2.5 L9 4" stroke="#2ca02c" stroke-width="1.2"/><path d="M12.5 1.8 L13.5 3.2" stroke="#c030c0" stroke-width="1"/>
<rect x="0.5" y="9.5" width="16" height="7" rx="2" fill="#dde2ea" stroke="#6a6a6a"/>
<rect x="2.5" y="12" width="8" height="1.2" fill="#888"/>
<rect x="12.5" y="11.5" width="2" height="3" fill="#2ecc40"/></svg>
<svg style="position:absolute;left:3px;top:691px;overflow:visible" width="18" height="15" viewBox="0 0 18 15" >
<defs>
<linearGradient id="wr" x1="0" y1="0" x2="1" y2="1"><stop offset="0" stop-color="#f8a040"/><stop offset="0.5" stop-color="#e83018"/><stop offset="1" stop-color="#f07020"/></linearGradient>
<linearGradient id="wg" x1="0" y1="0" x2="1" y2="1"><stop offset="0" stop-color="#a8e060"/><stop offset="1" stop-color="#40a020"/></linearGradient>
<linearGradient id="wb" x1="0" y1="0" x2="1" y2="1"><stop offset="0" stop-color="#9ad8f8"/><stop offset="1" stop-color="#2878d0"/></linearGradient>
<linearGradient id="wy" x1="0" y1="0" x2="1" y2="1"><stop offset="0" stop-color="#fff080"/><stop offset="1" stop-color="#f8a800"/></linearGradient>
</defs>
<path d="M3.4 0.8 Q6 -0.6 9.6 0.8 L8.6 6.2 Q5.5 5 2.4 6.2 Z" fill="url(#wr)"/>
<path d="M10.3 1.2 Q13.5 2.4 16.8 1.8 L15.8 7.2 Q12.6 7.8 9.3 6.6 Z" fill="url(#wg)"/>
<path d="M2.2 6.9 Q5.3 5.7 8.4 6.9 L7.4 12.4 Q4.3 11.2 1.2 12.2 Z" fill="url(#wb)"/>
<path d="M9.1 7.3 Q12.4 8.5 15.6 7.9 L14.6 13.3 Q11.5 14 8.1 12.8 Z" fill="url(#wy)"/>
</svg>
<svg style="position:absolute;left:74px;top:683px;overflow:visible" width="30" height="33" viewBox="0 0 30 33" >
<defs>
<linearGradient id="sv1" x1="0" y1="0" x2="1" y2="0"><stop offset="0" stop-color="#9aa4aa"/><stop offset="0.5" stop-color="#dfe4e8"/><stop offset="1" stop-color="#8c969c"/></linearGradient>
<linearGradient id="sv2" x1="0" y1="0" x2="1" y2="1"><stop offset="0" stop-color="#c8d0d4"/><stop offset="1" stop-color="#7c868c"/></linearGradient>
<linearGradient id="tbx" x1="0" y1="0" x2="0" y2="1"><stop offset="0" stop-color="#d4dce0"/><stop offset="0.5" stop-color="#a4b0b8"/><stop offset="1" stop-color="#707c84"/></linearGradient>
</defs>
<rect x="0.5" y="0" width="8" height="24" fill="url(#sv1)"/>
<rect x="8.5" y="0" width="10" height="20" fill="url(#sv2)"/>
<rect x="1.5" y="1" width="6" height="1.4" fill="#556"/>
<rect x="1.5" y="4.5" width="6" height="1" fill="#889"/><rect x="1.5" y="7.5" width="6" height="1" fill="#889"/>
<rect x="1.5" y="10.5" width="6" height="1" fill="#889"/><rect x="1.5" y="13.5" width="6" height="1" fill="#889"/>
<path d="M11 15.5 Q15.5 10 20 15.5" stroke="#2a3438" stroke-width="1.5" fill="none"/>
<path d="M4 17 L26 17 L28 21 L28 33 L5 31 L4 21 Z" fill="url(#tbx)"/>
<rect x="8.5" y="20.5" width="2" height="4" rx="1" fill="#f4f4ff" stroke="#3c4c7c" stroke-width="0.6"/>
<rect x="17" y="22" width="2" height="4" rx="1" fill="#f4f4ff" stroke="#3c4c7c" stroke-width="0.6"/>
<path d="M5 22 L28 23" stroke="#e8eef0" stroke-width="0.8"/>
</svg>
<svg style="position:absolute;left:122px;top:687px;overflow:visible" width="30" height="26" viewBox="0 0 30 26" >
<defs><linearGradient id="ps" x1="0" y1="0" x2="0" y2="1"><stop offset="0" stop-color="#a8daf4"/><stop offset="0.45" stop-color="#3a94d4"/><stop offset="1" stop-color="#1c6cc0"/></linearGradient></defs>
<path d="M0 3 L0 20" stroke="#c8d4dc" stroke-width="3" opacity="0.7"/>
<path d="M6.5 1 L28.5 1 Q29.5 1.2 29.2 2.5 L25.2 21.5 Q25 22.6 23.8 22.6 L2.4 22.6 Q1.4 22.4 1.7 21.2 L5.4 2 Q5.6 1 6.5 1 Z" fill="url(#ps)" stroke="#1a5a9c" stroke-width="0.9"/>
<path d="M10.3 4.8 L16.5 11 L8.8 17.8" stroke="#fff" stroke-width="2.3" fill="none" stroke-linecap="round"/>
<path d="M15.5 16.8 L21 16.8" stroke="#d8f0ff" stroke-width="1.6" stroke-linecap="round"/>
</svg>
<svg style="position:absolute;left:171px;top:686px;overflow:visible" width="32" height="30" viewBox="0 0 32 30" >
<defs><linearGradient id="fo" x1="0" y1="0" x2="1" y2="1"><stop offset="0" stop-color="#fdf4c0"/><stop offset="1" stop-color="#ecc860"/></linearGradient>
<linearGradient id="fb" x1="0" y1="0" x2="0" y2="1"><stop offset="0" stop-color="#c8ecfc"/><stop offset="1" stop-color="#4aa0dc"/></linearGradient></defs>
<path d="M1 0.5 L14 0.5 L15 2.5 L29 2.5 L30 4.5 L30 25.5 L0.5 25.5 L0.5 2 Z" fill="#f2d890" stroke="#c8a450" stroke-width="1"/>
<rect x="3" y="1.5" width="3" height="2" fill="#20c020"/><rect x="6" y="1.5" width="5" height="2" fill="#fff"/>
<rect x="11" y="3.5" width="3" height="2" fill="#d02020"/><rect x="14" y="3.5" width="6" height="2" fill="#fff"/>
<rect x="19" y="5.5" width="3" height="2" fill="#1890f0"/><rect x="22" y="5.5" width="5" height="2" fill="#fff"/>
<path d="M0.5 6 L18 6 L19 8 L30 8 L30 25.5 L0.5 25.5 Z" fill="url(#fo)" stroke="#c8a450" stroke-width="1"/>
<path d="M4.5 17.5 Q4.5 16 6 16 L25 16 Q26.5 16 26.5 17.5 L26.5 27.5 Q26.5 29 25 29 L21.5 29 Q20 29 20 27.5 L20 22 L11 22 L11 27.5 Q11 29 9.5 29 L6 29 Q4.5 29 4.5 27.5 Z" fill="url(#fb)" stroke="#3a8ccc" stroke-width="1"/>
</svg>
<svg style="position:absolute;left:221px;top:683px;overflow:visible" width="32" height="32" viewBox="0 0 32 32" >
<defs><linearGradient id="dm2" x1="0" y1="0" x2="1" y2="1"><stop offset="0" stop-color="#f8f8f8"/><stop offset="0.6" stop-color="#c8ccd0"/><stop offset="1" stop-color="#909aa4"/></linearGradient>
<linearGradient id="dm3" x1="0" y1="0" x2="1" y2="0"><stop offset="0" stop-color="#1c5aa8"/><stop offset="1" stop-color="#3a8ad0"/></linearGradient></defs>
<path d="M3.5 0.5 L27.5 0.5 L29.5 24 Q29.5 31 16 31 Q1.5 31 1.5 24 Z" fill="url(#dm2)" stroke="#b8c0c8" stroke-width="0.8"/>
<path d="M14 2 L27 2 L28 13 Q22 8 14 6 Z" fill="url(#dm3)"/>
<path d="M3 12 Q2.5 22 6 24 Q16 28 27 22 L27.5 20 Q16 25 6 20 Q4 16 3 12 Z" fill="#2a6ab8"/>
<ellipse cx="11.5" cy="14" rx="7" ry="7.5" fill="#f6f6f6" stroke="#d0d4d8" stroke-width="0.5"/>
<path d="M11 17.5 L21.5 6.5 L25 9.5 L14.5 20.5 Z" fill="#3cb8f0" stroke="#1a78b4" stroke-width="0.6"/>
<path d="M21.5 6.5 L23 5 L26.5 8 L25 9.5 Z" fill="#a8e0f8"/>
<path d="M11 17.5 L9.5 22.5 L14.5 20.5 Z" fill="#e8d8a0"/><path d="M10.2 20 L9.5 22.5 L12 21.5 Z" fill="#222"/>
<path d="M2 25.5 Q16 30 29.5 25.5" stroke="#4a9ad8" stroke-width="1.2" fill="none"/>
<path d="M18 18.5 L24.5 16.5 L31 18.5 L31 25 Q30 30 24.5 32 Q19 30 18 25 Z" fill="#fff" stroke="#a0a0a0" stroke-width="0.6"/>
<path d="M19.5 19.5 L24.5 18 L24.5 24.5 L19.5 24.5 Z" fill="#2a78d8"/>
<path d="M24.5 18 L29.5 19.5 L29.5 24.5 L24.5 24.5 Z" fill="#f8c800"/>
<path d="M19.5 24.5 L24.5 24.5 L24.5 30.5 Q20 29 19.5 25 Z" fill="#f8c800"/>
<path d="M24.5 24.5 L29.5 24.5 Q29 29 24.5 30.5 Z" fill="#2a78d8"/>
</svg>
<svg style="position:absolute;left:271px;top:683px;overflow:visible" width="32" height="32" viewBox="0 0 32 32" >
<defs><linearGradient id="rt" x1="0" y1="0" x2="0" y2="1"><stop offset="0" stop-color="#e44838"/><stop offset="1" stop-color="#b01818"/></linearGradient></defs>
<rect x="0.5" y="0.5" width="25" height="20" rx="1" fill="#f4f6f8" stroke="#7d8ca3" stroke-width="1"/>
<rect x="1" y="1" width="24" height="2.5" fill="#7d8ca3"/><rect x="2" y="1.7" width="15" height="1" fill="#e6ecf3"/>
<rect x="19" y="1.7" width="1" height="1" fill="#fff"/><rect x="21" y="1.7" width="1" height="1" fill="#fff"/><rect x="23" y="1.7" width="1" height="1" fill="#fff"/>
<rect x="1" y="4.5" width="24" height="1" fill="#9aa8bc"/>
<rect x="7.5" y="5" width="1" height="15" fill="#7d8ca3"/>
<rect x="2" y="8" width="4" height="0.9" fill="#556"/><rect x="3" y="10.5" width="2" height="0.9" fill="#556"/><rect x="2" y="13" width="4" height="0.9" fill="#556"/><rect x="3" y="15.5" width="2" height="0.9" fill="#556"/>
<path d="M12 15.5 Q12 11.5 16 11.5 Q20 11.5 20 15.5" stroke="#1a1a1a" stroke-width="1.4" fill="none"/>
<path d="M1.5 15.5 L23.5 15.5 L29 18.5 L29 31 L23 32 L2.5 28 Z" fill="url(#rt)"/>
<path d="M1.5 15.5 L23.5 15.5 L29 18.5 L3 19 Z" fill="#d83828"/>
<path d="M2 17.5 L14 18.5" stroke="#f8a898" stroke-width="0.8"/>
<rect x="5.5" y="20.5" width="2" height="4" fill="#d8dce0" stroke="#6a6a6a" stroke-width="0.4"/><rect x="14.5" y="22" width="2" height="4" fill="#d8dce0" stroke="#6a6a6a" stroke-width="0.4"/>
</svg>
<svg style="position:absolute;left:1112px;top:692px;overflow:visible" width="8" height="10" viewBox="0 0 8 10" ><path d="M1.2 4.2 L3.5 1.8 L5.8 4.2 M1.2 8.2 L3.5 5.8 L5.8 8.2" stroke="#000" stroke-width="1.5" fill="none"/></svg>
<svg style="position:absolute;left:1128px;top:690px;overflow:visible" width="18" height="18" viewBox="0 0 18 18" >
<rect x="1.5" y="1.5" width="2.2" height="15" rx="1" fill="#fff" stroke="#505050" stroke-width="0.9"/>
<path d="M3.7 2.2 L9 2.2 Q10 4 12.5 4 Q15 4 16.5 3.6 Q16.2 6.5 14 8.4 Q12.2 9.5 9.5 8.3 L3.7 8.3 Z" fill="#f6f6f6" stroke="#505050" stroke-width="0.9"/>
<path d="M8.5 2.5 L8.5 8" stroke="#c8c8c8" stroke-width="0.8"/>
</svg>
<svg style="position:absolute;left:1152px;top:690px;overflow:visible" width="18" height="18" viewBox="0 0 18 18" >
<rect x="6.5" y="3.5" width="10" height="9.5" fill="#f0f0f0" stroke="#505050" stroke-width="0.9"/>
<rect x="8" y="5" width="7" height="6.5" fill="#8c8c8c"/>
<rect x="8.5" y="13" width="6" height="1.5" fill="#fff" stroke="#505050" stroke-width="0.6"/>
<rect x="6.5" y="14.5" width="10" height="1.5" fill="#fff" stroke="#505050" stroke-width="0.7"/>
<path d="M1.5 1 L1.5 5.5 Q1.5 7 3.5 7 Q5.5 7 5.5 5.5 L5.5 1 M3.5 1 L3.5 4.5" stroke="#404040" stroke-width="0.9" fill="#fff"/>
<rect x="3" y="7" width="1.2" height="9.5" fill="#303030"/>
</svg>
<svg style="position:absolute;left:1176px;top:690px;overflow:visible" width="18" height="18" viewBox="0 0 18 18" >
<path d="M1.5 6 L4 6 L7.5 1.5 L7.5 15.5 L4 11 L1.5 11 Z" fill="#f4f4f4" stroke="#505050" stroke-width="0.8"/>
<circle cx="12" cy="12.3" r="4.6" fill="#e02020" stroke="#f8f8f8" stroke-width="0.7"/>
<path d="M10 10.3 L14 14.3 M14 10.3 L10 14.3" stroke="#fff" stroke-width="1.5"/>
</svg>
<svg style="position:absolute;left:1260px;top:693px;overflow:visible" width="16" height="13" viewBox="0 0 16 13" >
<defs><linearGradient id="sd" x1="0" y1="0" x2="1" y2="1"><stop offset="0" stop-color="#7ab4f0"/><stop offset="0.5" stop-color="#2a68c8"/><stop offset="1" stop-color="#1a48a0"/></linearGradient></defs>
<rect x="0.5" y="0.5" width="15" height="12" fill="url(#sd)" stroke="#b8c4d0" stroke-width="1"/>
<rect x="1" y="9.5" width="14" height="2.5" fill="#181818"/>
<rect x="1.5" y="9" width="2.5" height="2.5" fill="#f8c800"/><rect x="1.5" y="9" width="1.2" height="1.2" fill="#e83018"/>
</svg>
</body></html>
